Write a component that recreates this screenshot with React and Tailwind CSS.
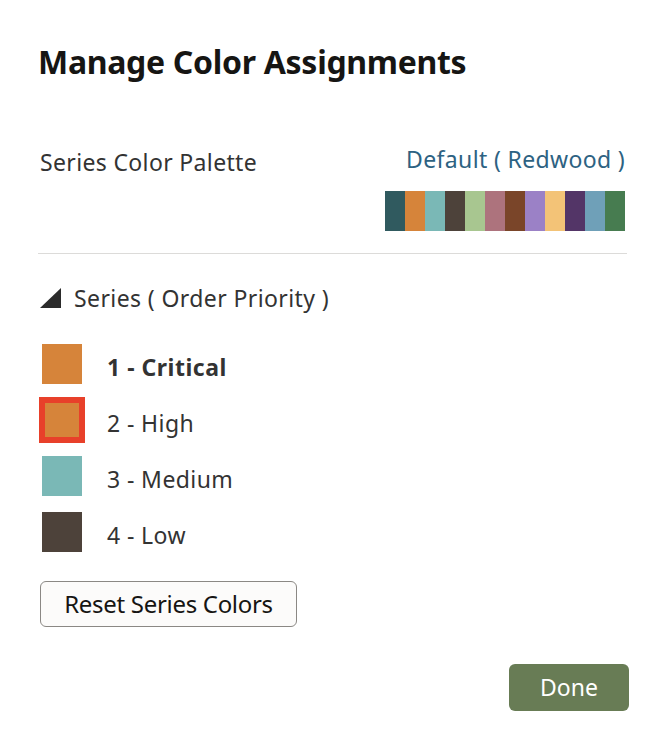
import React from "react";

const palette = [
  "#305a5f",
  "#d6843a",
  "#7ab8b6",
  "#4d423a",
  "#a8c690",
  "#ad737d",
  "#7a4529",
  "#9b81c6",
  "#f3c377",
  "#533567",
  "#6fa0b8",
  "#477c50",
];

const series = [
  { label: "1 - Critical", color: "#d6843a", bold: true },
  { label: "2 - High", color: "#d6843a", selected: true },
  { label: "3 - Medium", color: "#7ab8b6" },
  { label: "4 - Low", color: "#4d423a" },
];

export default function App() {
  return (
    <div
      className="w-[665px] h-[749px] bg-white text-[#333] flex flex-col px-[38px]"
      style={{ fontFamily: '"Noto Sans", "Open Sans", sans-serif' }}
    >
      <h1 className="mt-[42px] text-[32px] font-bold text-[#161513] leading-[40px] tracking-[-0.3px]">
        Manage Color Assignments
      </h1>

      <div className="mt-[61px] flex justify-between px-[2px]">
        <div className="text-[23px] leading-[32px] tracking-[0.35px] pt-[3px]">Series Color Palette</div>
        <div className="flex flex-col items-end">
          <div className="text-[23px] leading-[32px] tracking-[0.35px] text-[#2d6282]">Default ( Redwood )</div>
          <div className="flex mt-[16px]">
            {palette.map((c) => (
              <div key={c} className="w-[20px] h-[40px]" style={{ backgroundColor: c }} />
            ))}
          </div>
        </div>
      </div>

      <div className="mt-[22px] h-px bg-[#dcdbd9]" />

      <div className="mt-[28px] flex items-center gap-[13px] pl-[2px]">
        <svg width="21" height="20" viewBox="0 0 21 20">
          <path d="M21 0 L21 20 L0 20 Z" fill="#2b2b2b" />
        </svg>
        <span className="text-[23px] leading-[32px] tracking-[0.4px]">Series ( Order Priority )</span>
      </div>

      <div className="mt-[30px] flex flex-col gap-[16px]">
        {series.map((s) => (
          <div key={s.label} className="flex items-center gap-[25px] pl-[4px]">
            <div
              className={
                s.selected
                  ? "w-[40px] h-[40px] shadow-[0_0_0_3px_#e8402a,inset_0_0_0_3px_#e8402a]"
                  : "w-[40px] h-[40px]"
              }
              style={{ backgroundColor: s.color }}
            />
            <span
              className={
                s.bold
                  ? "pt-[5px] text-[23px] leading-[32px] tracking-[0.5px] font-bold"
                  : "pt-[5px] text-[23px] leading-[32px] tracking-[0.4px]"
              }
            >
              {s.label}
            </span>
          </div>
        ))}
      </div>

      <div className="mt-[29px] pl-[2px]">
        <button className="h-[46px] w-[257px] rounded-[6px] border border-[#8b8884] bg-[#fcfbfa] text-[24px] tracking-[-0.3px] text-[#161513]">
          Reset Series Colors
        </button>
      </div>

      <div className="mt-[37px] flex justify-end">
        <button className="h-[47px] w-[120px] -mr-[2px] rounded-[6px] bg-[#687c55] text-[23px] text-white">
          Done
        </button>
      </div>
    </div>
  );
}
